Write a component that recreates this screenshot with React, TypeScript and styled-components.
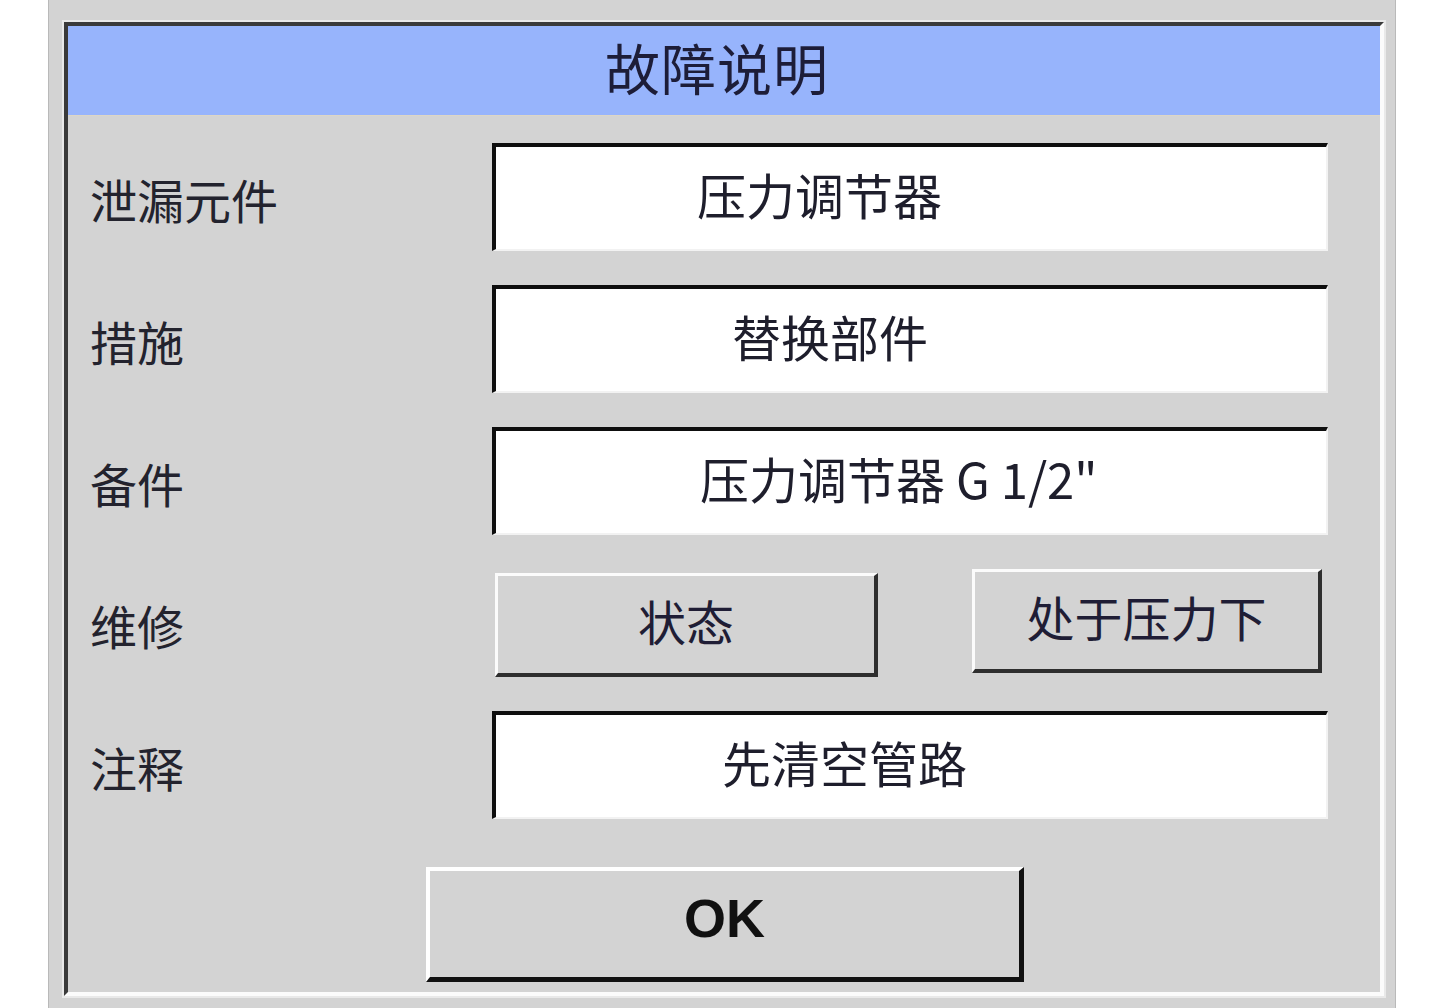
import React from "react";
import styled, { createGlobalStyle } from "styled-components";

const GlobalStyle = createGlobalStyle`
  html, body {
    margin: 0;
    padding: 0;
    background: #ffffff;
  }
  body {
    font-family: "Noto Sans CJK SC", "Noto Sans", sans-serif;
  }
`;

type Row = {
  label: string;
  value: string;
  indent: number;
};

const rows: Row[] = [
  { label: "泄漏元件", value: "压力调节器", indent: 201 },
  { label: "措施", value: "替换部件", indent: 236 },
  { label: "备件", value: "压力调节器 G 1/2\"", indent: 204 },
];

const App = () => {
  return (
    <>
      <GlobalStyle />
      <Page>
        <Panel>
          <Frame>
            <Header>故障说明</Header>
            <Body>
              {rows.map((row) => (
                <FieldRow key={row.label}>
                  <Label>{row.label}</Label>
                  <Field indent={row.indent}>{row.value}</Field>
                </FieldRow>
              ))}
              <FieldRow>
                <Label>维修</Label>
                <ButtonPair>
                  <RaisedButton width={383} lift={4}>状态</RaisedButton>
                  <RaisedButton width={350} lift={0}>处于压力下</RaisedButton>
                </ButtonPair>
              </FieldRow>
              <FieldRow>
                <Label>注释</Label>
                <Field indent={226}>先清空管路</Field>
              </FieldRow>
              <Footer>
                <OkButton type="button">OK</OkButton>
              </Footer>
            </Body>
          </Frame>
        </Panel>
      </Page>
    </>
  );
};

const Page = styled.div`
  width: 1440px;
  height: 1008px;
  overflow: hidden;
  padding-left: 48px;
  box-sizing: border-box;
`;

const Panel = styled.div`
  width: 1348px;
  height: 1008px;
  box-sizing: border-box;
  background: #d3d3d3;
  border-left: 1px solid #b9b9b9;
  border-right: 1px solid #b9b9b9;
  padding: 22px 11px 0 15px;
`;

const Frame = styled.div`
  width: 1320px;
  height: 974px;
  box-sizing: border-box;
  border-top: 4px solid #3a3a3a;
  border-left: 4px solid #3a3a3a;
  border-right: 4px solid #fbfbfb;
  border-bottom: 4px solid #fbfbfb;
  box-shadow: 0 0 0 2px #e9e9e9;
  display: flex;
  flex-direction: column;
`;

const Header = styled.div`
  height: 90px;
  box-sizing: border-box;
  padding: 0 14px 10px 0;
  background: #97b4fc;
  border-bottom: 1px solid #ddd6c6;
  display: flex;
  align-items: center;
  justify-content: center;
  font-size: 55px;
  color: #1d1d38;
  letter-spacing: 1px;
`;

const Body = styled.div`
  flex: 1;
  padding: 27px 52px 0 22px;
  display: flex;
  flex-direction: column;
  gap: 34px;
`;

const FieldRow = styled.div`
  display: grid;
  grid-template-columns: 402px 1fr;
  align-items: center;
  height: 108px;
`;

const Label = styled.div`
  font-size: 47px;
  color: #23232e;
  padding-top: 2px;
`;

const Field = styled.div<{ indent: number }>`
  height: 108px;
  box-sizing: border-box;
  background: #ffffff;
  border-top: 4px solid #0e0e0e;
  border-left: 4px solid #0e0e0e;
  border-right: 2px solid #f2f2f2;
  border-bottom: 2px solid #f2f2f2;
  display: flex;
  align-items: center;
  padding-left: ${(p) => p.indent}px;
  padding-bottom: 10px;
  font-size: 49px;
  color: #1e1e2c;
  white-space: pre;
`;

const ButtonPair = styled.div`
  display: flex;
  justify-content: space-between;
  padding: 0 6px 0 3px;
`;

const RaisedButton = styled.button<{ width: number; lift: number }>`
  width: ${(p) => p.width}px;
  height: 104px;
  margin-top: ${(p) => p.lift}px;
  box-sizing: border-box;
  background: #d3d3d3;
  border-top: 3px solid #fbfbfb;
  border-left: 3px solid #fbfbfb;
  border-right: 4px solid #2e2e2e;
  border-bottom: 4px solid #2e2e2e;
  border-radius: 0;
  padding: 0 0 10px 0;
  font-family: "Noto Sans CJK SC", "Noto Sans", sans-serif;
  font-size: 48px;
  color: #1f1d35;
  display: flex;
  align-items: center;
  justify-content: center;
`;

const Footer = styled.div`
  display: flex;
  justify-content: center;
  padding-top: 14px;
  padding-left: 32px;
`;

const OkButton = styled.button`
  width: 598px;
  height: 115px;
  box-sizing: border-box;
  background: #d3d3d3;
  border-top: 4px solid #ffffff;
  border-left: 4px solid #ffffff;
  border-right: 5px solid #111111;
  border-bottom: 5px solid #111111;
  border-radius: 0;
  padding: 0 0 12px 0;
  font-family: "Liberation Sans", Arial, sans-serif;
  font-weight: bold;
  font-size: 54px;
  color: #111111;
`;

export default App;
